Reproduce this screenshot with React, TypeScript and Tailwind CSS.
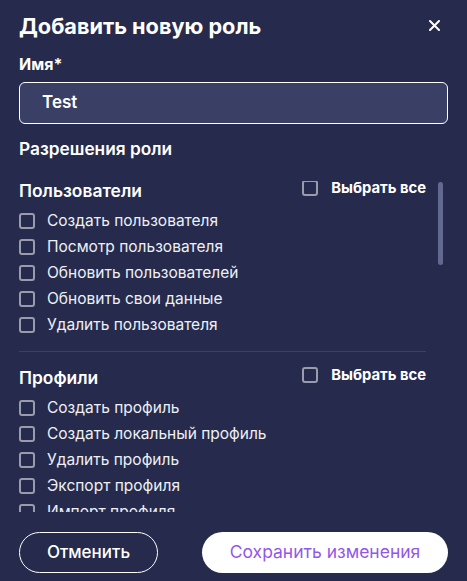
import React, { useState } from 'react';

interface Section {
  id: string;
  title: string;
  items: string[];
}

const sections: Section[] = [
  {
    id: 'users',
    title: 'Пользователи',
    items: [
      'Создать пользователя',
      'Посмотр пользователя',
      'Обновить пользователей',
      'Обновить свои данные',
      'Удалить пользователя',
    ],
  },
  {
    id: 'profiles',
    title: 'Профили',
    items: [
      'Создать профиль',
      'Создать локальный профиль',
      'Удалить профиль',
      'Экспорт профиля',
      'Импорт профиля',
      'Обновить профиль',
    ],
  },
];

const Box = () => (
  <span className="block w-4 h-4 shrink-0 rounded-[3px] border-2 border-[#9a9cab]" />
);

const App = () => {
  const [name, setName] = useState('Test');

  return (
    <div
      className="w-[467px] h-[581px] bg-[#262b4d] text-white flex flex-col px-[19px] overflow-hidden"
      style={{ fontFamily: 'Inter, "Noto Sans", sans-serif' }}
    >
      {/* Header */}
      <div className="flex items-center justify-between pt-[8px] h-[44px] shrink-0">
        <h2 className="text-[21.7px] leading-7 font-bold">Добавить новую роль</h2>
        <svg width="11" height="11" viewBox="0 0 11 11" className="mr-[8px] -mt-[1px]">
          <path d="M1 1L10 10M10 1L1 10" stroke="white" strokeWidth="2" strokeLinecap="round" />
        </svg>
      </div>

      {/* Name field */}
      <label className="mt-[10px] text-[16px] leading-5 font-bold">Имя*</label>
      <div className="mt-[8px] h-[42px] shrink-0 rounded-[6px] border border-white bg-[#3a3f66] flex items-center pl-[22px]">
        <input
          value={name}
          onChange={(e) => setName(e.target.value)}
          className="bg-transparent outline-none text-[17px] font-semibold text-white w-full"
        />
      </div>

      <div className="mt-[15px] text-[17.3px] leading-5 font-semibold">Разрешения роли</div>

      {/* Scroll area */}
      <div className="relative mt-[22px] h-[331px] shrink-0 overflow-hidden">
        <div className="pr-[22px]">
          {sections.map((section, si) => (
            <div key={section.id}>
              {si > 0 && <div className="h-px bg-[#3b406a] mt-[13px] mb-[16px]" />}
              <div className="flex items-center justify-between h-[20px]">
                <span className="text-[17.4px] font-semibold mt-[1px]">{section.title}</span>
                <div className="flex items-center gap-[13px] -mt-[6px]">
                  <Box />
                  <span className="text-[14.8px] font-bold">Выбрать все</span>
                </div>
              </div>
              <div className="mt-[7px] flex flex-col">
                {section.items.map((item) => (
                  <div key={item} className="flex items-center gap-[12px] h-[26px]">
                    <Box />
                    <span className="text-[15.5px] text-[#eef0f6]">{item}</span>
                  </div>
                ))}
              </div>
            </div>
          ))}
        </div>
        {/* scrollbar thumb */}
        <div className="absolute right-[5px] top-[1px] w-[5px] h-[83px] rounded-full bg-[#62688f]" />
      </div>

      {/* Footer */}
      <div className="mt-[20px] flex items-center gap-[44px] shrink-0">
        <button className="w-[139px] h-[41px] rounded-full border border-white text-[17px] font-medium">
          Отменить
        </button>
        <button className="flex-1 h-[41px] rounded-full bg-white text-[#9457eb] text-[17.5px]">
          Сохранить изменения
        </button>
      </div>
    </div>
  );
};

export default App;
